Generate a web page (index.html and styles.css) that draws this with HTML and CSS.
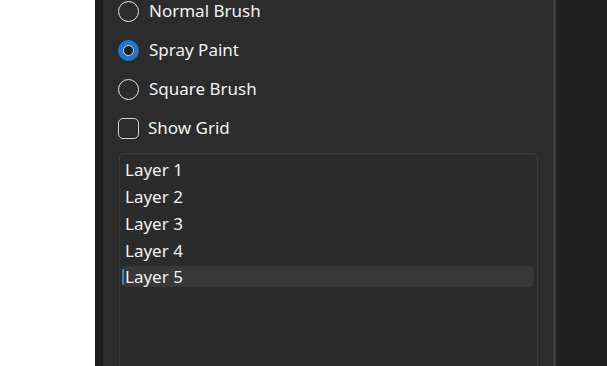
FILE: index.html
```html
<!DOCTYPE html>
<html>
<head>
<meta charset="utf-8">
<link rel="stylesheet" href="styles.css">
</head>
<body>
<div class="app">
  <div class="blank"></div>
  <div class="strip"></div>
  <div class="panel">
    <div class="options">
      <label class="opt"><span class="radio"></span><span class="lbl">Normal Brush</span></label>
      <label class="opt"><span class="radio checked"></span><span class="lbl">Spray Paint</span></label>
      <label class="opt"><span class="radio"></span><span class="lbl">Square Brush</span></label>
      <label class="opt"><span class="check"></span><span class="lbl lbl-check">Show Grid</span></label>
    </div>
    <div class="list">
      <div class="item">Layer 1</div>
      <div class="item">Layer 2</div>
      <div class="item">Layer 3</div>
      <div class="item">Layer 4</div>
      <div class="item selected">Layer 5</div>
    </div>
  </div>
  <div class="divider"></div>
  <div class="rest"></div>
</div>
</body>
</html>
```
FILE: styles.css
```css
html, body {
  margin: 0;
  padding: 0;
  background: #ffffff;
  height: 100%;
  overflow: hidden;
}
.app {
  display: flex;
  height: 366px;
  font-family: "Noto Sans", "Open Sans", sans-serif;
  color: #ffffff;
}
.blank {
  width: 95px;
  background: #ffffff;
}
.strip {
  width: 8px;
  background: #1f1f1f;
}
.panel {
  width: 450px;
  background: #2c2c2c;
  padding: 0 0 0 15px;
  box-sizing: border-box;
  display: flex;
  flex-direction: column;
}
.divider {
  width: 3px;
  background: #3b3b3b;
}
.rest {
  flex: 1;
  background: #202020;
}
.options {
  display: flex;
  flex-direction: column;
  gap: 17px;
}
.opt {
  display: flex;
  align-items: center;
  height: 22px;
}
.radio {
  width: 19px;
  height: 19px;
  border: 1.5px solid #e6e6e6;
  border-radius: 50%;
  box-sizing: content-box;
  flex: none;
  position: relative;
}
.radio.checked {
  background: #1f78cf;
  border-color: #1f78cf;
}
.radio.checked::after {
  content: "";
  position: absolute;
  left: 4px;
  top: 4px;
  width: 9px;
  height: 9px;
  border-radius: 50%;
  background: #1c1c1c;
  border: 1px solid #cfd8e0;
}
.check {
  width: 19px;
  height: 19px;
  border: 1.5px solid #d2d2d2;
  border-radius: 5px;
  box-sizing: content-box;
  flex: none;
}
.lbl {
  margin-left: 10px;
  font-size: 17px;
  line-height: 22px;
  color: #f2f2f2;
}
.lbl-check {
  margin-left: 9px;
}
.list {
  margin-top: 14px;
  margin-left: 1px;
  width: 419px;
  flex: 1;
  border: 1px solid #3c3c3c;
  border-bottom: none;
  border-radius: 5px 5px 0 0;
  background: #2b2b2b;
  padding: 2px 3px 0 1px;
  box-sizing: border-box;
  box-shadow: inset 0 1px 0 #303030;
}
.item {
  height: 27px;
  line-height: 27px;
  padding-left: 4px;
  font-size: 17px;
  color: #f2f2f2;
  position: relative;
}
.item.selected {
  height: 21px;
  line-height: 21px;
  margin-top: 2px;
  background: #383838;
  border-radius: 5px;
  margin-left: 1px;
  padding-left: 3px;
}
.item.selected::before {
  content: "";
  position: absolute;
  left: 0;
  top: 3px;
  width: 2px;
  height: 16px;
  border-radius: 1px;
  background: #3f7fc4;
}
```
